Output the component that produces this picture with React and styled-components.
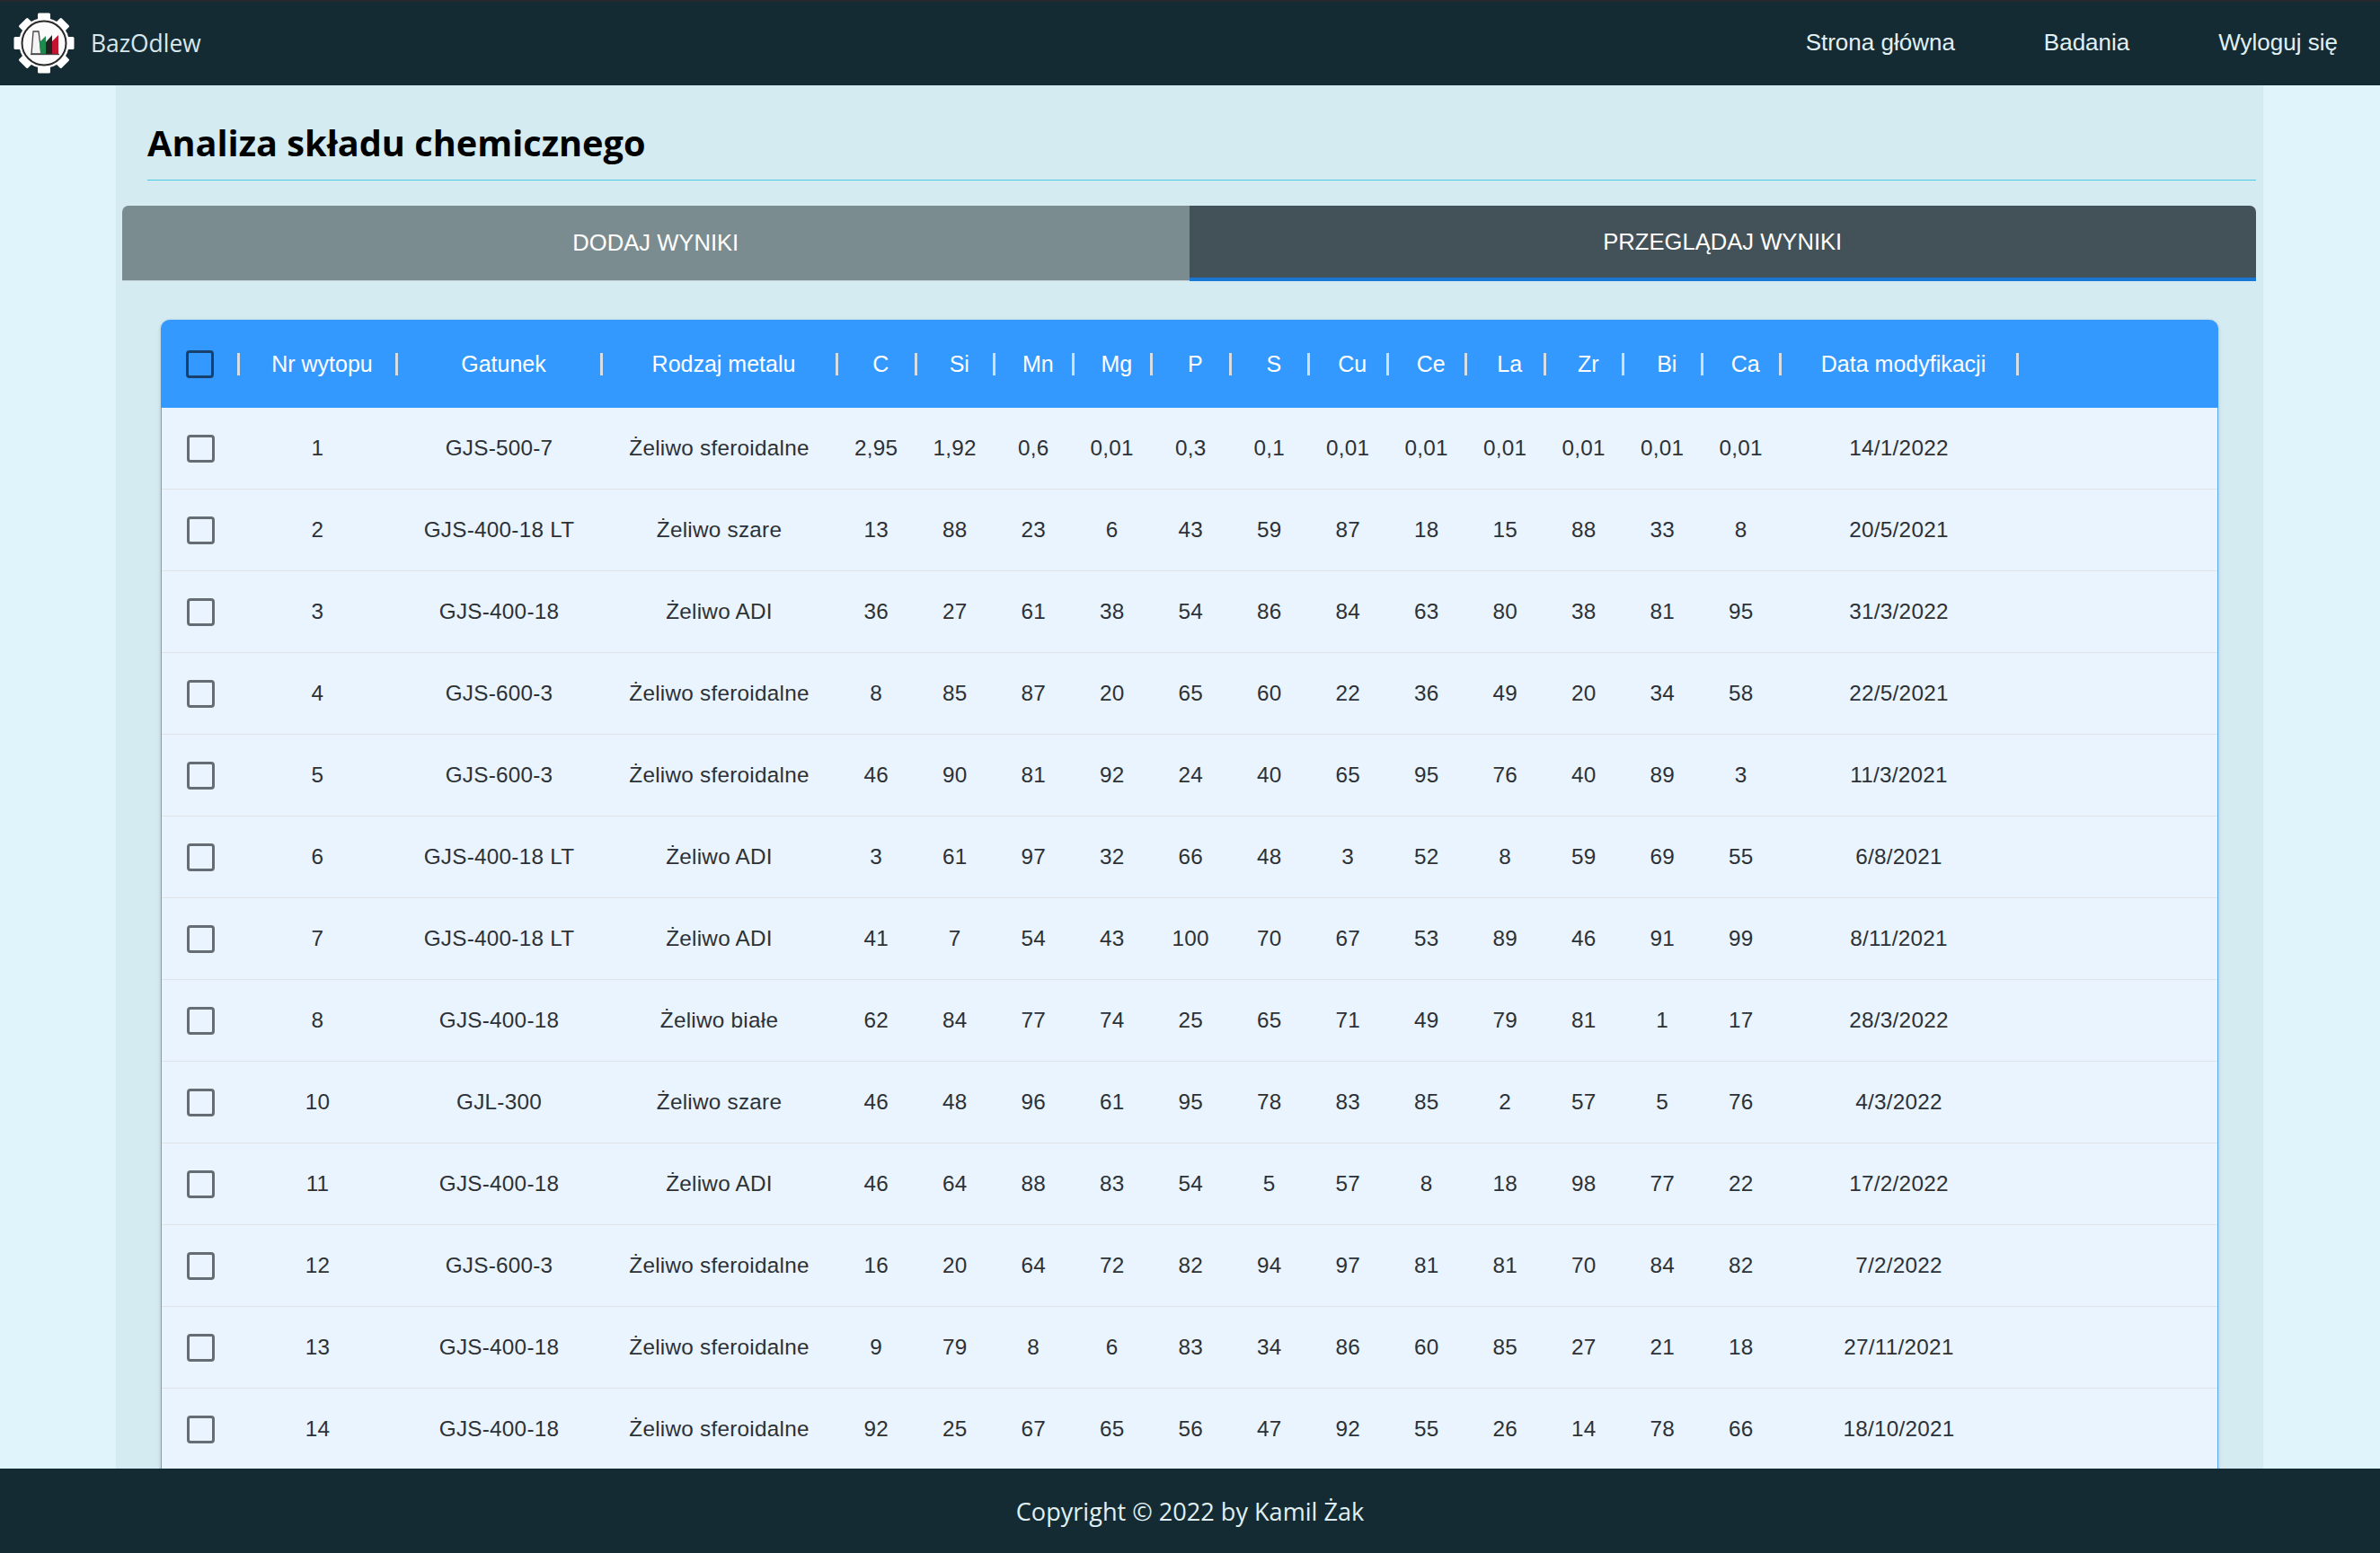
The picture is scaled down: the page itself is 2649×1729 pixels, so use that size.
import styled, { createGlobalStyle, css } from "styled-components";

const GlobalStyle = createGlobalStyle`
    html, body {
        margin: 0;
        padding: 0;
        height: 100%;
        overflow: hidden;
    }
    #root {
        height: 100%;
    }
`

const columnsGrid = css`
    display: grid;
    grid-template-columns: 88px 176px 228px 262px repeat(12, 87.5px) 264px 1fr;
`

const Page = styled.div`
    height: 1729px;
    display: flex;
    flex-direction: column;
    background: #e0f5fb;
    font-family: "Liberation Sans", Arial, sans-serif;
`
const Navbar = styled.header`
    flex: 0 0 95px;
    box-sizing: border-box;
    border-top: 2px solid #25292c;
    background: #152b33;
    display: flex;
    align-items: center;
    justify-content: space-between;
    padding: 0 47px 2px 15px;
`
const Brand = styled.div`
    display: flex;
    align-items: center;
    gap: 18px;
    color: #d6e8ee;
    font-family: "Open Sans", sans-serif;
    font-size: 26.4px;
`
const NavLinks = styled.nav`
    display: flex;
    gap: 99px;
`
const NavLink = styled.a`
    color: #e0f0f4;
    font-size: 26px;
`
const Main = styled.main`
    flex: 1;
    min-height: 0;
    overflow: hidden;
    margin: 0 130px 0 129px;
    background: #d4ebf1;
    padding-right: 8px;
`
const Title = styled.h1`
    margin: 0 0 28px 35px;
    height: 106px;
    box-sizing: border-box;
    padding-top: 36px;
    border-bottom: 1px solid #4cc9e0;
    color: #000;
    font-family: "Open Sans", sans-serif;
    font-size: 39.7px;
    line-height: 56px;
    font-weight: 700;
`
const Tabs = styled.div`
    display: flex;
    margin-left: 7px;
    border-radius: 7px 7px 0 0;
    overflow: hidden;
`
const Tab = styled.div`
    flex: 1;
    height: 84px;
    box-sizing: border-box;
    display: flex;
    align-items: center;
    justify-content: center;
    color: #fff;
    font-size: 25.6px;
    text-transform: uppercase;
    background: ${p => (p.$active ? "#435159" : "#7b8c91")};
    border-bottom: ${p => (p.$active ? "4px solid #1976d2" : "1px solid #c4d2d6")};
`
const Table = styled.div`
    margin: 43px 42px 0 50px;
    border: solid #5aa8ee;
    border-width: 0 1px;
    border-radius: 10px 10px 0 0;
    background: #e9f4ff;
    box-shadow: 0 1px 4px rgba(0, 0, 0, 0.18);
`
const HeadRow = styled.div`
    ${columnsGrid}
    height: 98px;
    background: #3399ff;
    border-radius: 10px 10px 0 0;
    margin: 0 -1px;
`
const HeadCell = styled.div`
    display: flex;
    align-items: center;
    color: #fff;
    font-size: 25px;
    font-weight: 500;
`
const HeadCheck = styled.div`
    flex: 1;
    padding-left: 28px;
    display: flex;
    align-items: center;
`
const HeadLabel = styled.span`
    flex: 1;
    text-align: center;
    padding-left: 10px;
`
const Separator = styled.span`
    flex: 0 0 3px;
    height: 25px;
    background: #d5dde5;
`
const Row = styled.div`
    ${columnsGrid}
    height: 91px;
    box-sizing: border-box;
    border-bottom: 1px solid #dfe3e6;
`
const Cell = styled.div`
    display: flex;
    align-items: center;
    justify-content: center;
    color: #2d3135;
    font-size: 24.3px;
    letter-spacing: 0.25px;
    padding-right: 5px;
`
const CheckCell = styled.div`
    display: flex;
    align-items: center;
    padding-left: 28px;
`
const CheckBox = styled.span`
    width: 31px;
    height: 31px;
    box-sizing: border-box;
    border: 3px solid ${p => (p.$head ? "#17406d" : "#666c73")};
    border-radius: 4px;
`
const Footer = styled.footer`
    flex: 0 0 94px;
    background: #152b33;
    display: flex;
    align-items: center;
    justify-content: center;
    color: #e0f0f4;
    font-family: "Open Sans", sans-serif;
    font-size: 27.1px;
`

const Logo = () => {
    const teeth = [0, 45, 90, 135, 180, 225, 270, 315]
    return (
        <svg width="68" height="68" viewBox="0 0 68 68">
            {teeth.map(angle => (
                <rect key={angle} x="27" y="0.5" width="14" height="12" rx="1.5" fill="#fff" transform={`rotate(${angle} 34 34)`} />
            ))}
            <circle cx="34" cy="34" r="28" fill="#fff" />
            <circle cx="34" cy="34" r="24.5" fill="#fbfbfb" stroke="#2a2a2a" strokeWidth="2" />
            <path d="M20 46 L22 21 H28 L31 46 Z" fill="#f4f4f4" stroke="#444" strokeWidth="1.3" />
            <path d="M30 46 L29 33 L36 26 V33 H36 V46 Z" fill="#1d8a4e" />
            <path d="M36 46 V33 L43 25 V46 Z" fill="#222" />
            <path d="M43 46 V32 L50 25 V46 Z" fill="#c5142f" />
            <path d="M19 46.5 H51" stroke="#444" strokeWidth="1.3" />
        </svg>
    )
}

const headers = ["Nr wytopu", "Gatunek", "Rodzaj metalu", "C", "Si", "Mn", "Mg", "P", "S", "Cu", "Ce", "La", "Zr", "Bi", "Ca", "Data modyfikacji"]

const rows = [
    ["1", "GJS-500-7", "Żeliwo sferoidalne", "2,95", "1,92", "0,6", "0,01", "0,3", "0,1", "0,01", "0,01", "0,01", "0,01", "0,01", "0,01", "14/1/2022"],
    ["2", "GJS-400-18 LT", "Żeliwo szare", "13", "88", "23", "6", "43", "59", "87", "18", "15", "88", "33", "8", "20/5/2021"],
    ["3", "GJS-400-18", "Żeliwo ADI", "36", "27", "61", "38", "54", "86", "84", "63", "80", "38", "81", "95", "31/3/2022"],
    ["4", "GJS-600-3", "Żeliwo sferoidalne", "8", "85", "87", "20", "65", "60", "22", "36", "49", "20", "34", "58", "22/5/2021"],
    ["5", "GJS-600-3", "Żeliwo sferoidalne", "46", "90", "81", "92", "24", "40", "65", "95", "76", "40", "89", "3", "11/3/2021"],
    ["6", "GJS-400-18 LT", "Żeliwo ADI", "3", "61", "97", "32", "66", "48", "3", "52", "8", "59", "69", "55", "6/8/2021"],
    ["7", "GJS-400-18 LT", "Żeliwo ADI", "41", "7", "54", "43", "100", "70", "67", "53", "89", "46", "91", "99", "8/11/2021"],
    ["8", "GJS-400-18", "Żeliwo białe", "62", "84", "77", "74", "25", "65", "71", "49", "79", "81", "1", "17", "28/3/2022"],
    ["10", "GJL-300", "Żeliwo szare", "46", "48", "96", "61", "95", "78", "83", "85", "2", "57", "5", "76", "4/3/2022"],
    ["11", "GJS-400-18", "Żeliwo ADI", "46", "64", "88", "83", "54", "5", "57", "8", "18", "98", "77", "22", "17/2/2022"],
    ["12", "GJS-600-3", "Żeliwo sferoidalne", "16", "20", "64", "72", "82", "94", "97", "81", "81", "70", "84", "82", "7/2/2022"],
    ["13", "GJS-400-18", "Żeliwo sferoidalne", "9", "79", "8", "6", "83", "34", "86", "60", "85", "27", "21", "18", "27/11/2021"],
    ["14", "GJS-400-18", "Żeliwo sferoidalne", "92", "25", "67", "65", "56", "47", "92", "55", "26", "14", "78", "66", "18/10/2021"],
]

const App = () => {
    return (
        <Page>
            <GlobalStyle/>
            <Navbar>
                <Brand>
                    <Logo/>
                    BazOdlew
                </Brand>
                <NavLinks>
                    <NavLink>Strona główna</NavLink>
                    <NavLink>Badania</NavLink>
                    <NavLink>Wyloguj się</NavLink>
                </NavLinks>
            </Navbar>
            <Main>
                <Title>Analiza składu chemicznego</Title>
                <Tabs>
                    <Tab>Dodaj wyniki</Tab>
                    <Tab $active>Przeglądaj wyniki</Tab>
                </Tabs>
                <Table>
                    <HeadRow>
                        <HeadCell>
                            <HeadCheck>
                                <CheckBox $head/>
                            </HeadCheck>
                            <Separator/>
                        </HeadCell>
                        {headers.map(name => (
                            <HeadCell key={name}>
                                <HeadLabel>{name}</HeadLabel>
                                <Separator/>
                            </HeadCell>
                        ))}
                    </HeadRow>
                    {rows.map(row => (
                        <Row key={row[0]}>
                            <CheckCell>
                                <CheckBox/>
                            </CheckCell>
                            {row.map((value, i) => (
                                <Cell key={i}>{value}</Cell>
                            ))}
                        </Row>
                    ))}
                </Table>
            </Main>
            <Footer>Copyright © 2022 by Kamil Żak</Footer>
        </Page>
    )
}

export default App
